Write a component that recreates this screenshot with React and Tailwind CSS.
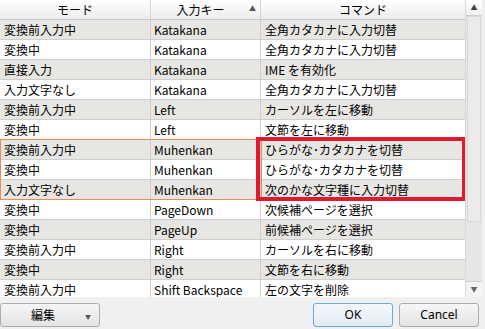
import React from "react";

const rows = [
  ["変換前入力中", "Katakana", "全角カタカナに入力切替"],
  ["変換中", "Katakana", "全角カタカナに入力切替"],
  ["直接入力", "Katakana", "IME を有効化"],
  ["入力文字なし", "Katakana", "全角カタカナに入力切替"],
  ["変換前入力中", "Left", "カーソルを左に移動"],
  ["変換中", "Left", "文節を左に移動"],
  ["変換前入力中", "Muhenkan", "ひらがな･カタカナを切替"],
  ["変換中", "Muhenkan", "ひらがな･カタカナを切替"],
  ["入力文字なし", "Muhenkan", "次のかな文字種に入力切替"],
  ["変換中", "PageDown", "次候補ページを選択"],
  ["変換中", "PageUp", "前候補ページを選択"],
  ["変換前入力中", "Right", "カーソルを右に移動"],
  ["変換中", "Right", "文節を右に移動"],
  ["変換前入力中", "Shift Backspace", "左の文字を削除"],
];

export default function App() {
  return (
    <div
      className="w-[485px] h-[329px] bg-[#f0f0f0] flex flex-col overflow-hidden text-[12px] text-black"
      style={{ fontFamily: '"Noto Sans CJK JP", "Noto Sans", sans-serif' }}
    >
      <div className="flex h-[297px] shrink-0">
        <div className="relative w-[465px] h-[297px] overflow-hidden bg-white">
          {/* header */}
          <div className="flex h-[20px] border-b border-[#c9c9c9] bg-gradient-to-b from-[#ffffff] to-[#ececec]">
            <div className="w-[151px] border-r border-[#d4d4d4] flex items-center justify-center leading-none">モード</div>
            <div className="w-[110px] border-r border-[#d4d4d4] flex items-center justify-center relative leading-none">
              <span className="ml-[-10px]">入力キー</span>
              <span className="absolute right-[4px] top-[5px] text-[7px] text-[#555]">▲</span>
            </div>
            <div className="flex-1 flex items-center justify-center leading-none">コマンド</div>
          </div>
          {rows.map((r, i) => (
            <div
              key={i}
              className={`flex h-[20px] border-b border-[#cfcfcf] ${i % 2 === 0 ? "bg-[#e8e6e3]" : "bg-white"}`}
            >
              <div className="w-[151px] border-r border-[#cfcfcf] flex items-center pl-[4px] leading-none">{r[0]}</div>
              <div className="w-[110px] border-r border-[#cfcfcf] flex items-center pl-[3px] leading-none">{r[1]}</div>
              <div className="flex-1 flex items-center pl-[4px] leading-none">{r[2]}</div>
            </div>
          ))}
          <div className="absolute left-0 top-[139px] w-[262px] h-[61px] border border-[#ee8a55] pointer-events-none" />
          <div className="absolute left-[256px] top-[137px] w-[210px] h-[64px] border-[4px] border-[#e0192f] pointer-events-none" />
        </div>
        <div className="w-[17px] h-[297px] bg-[#e6e6e6] flex flex-col border-l border-[#d8d8d8]">
          <div className="h-[16px] bg-gradient-to-b from-white to-[#f0f0f0] border-b border-[#cfcfcf] flex items-center justify-center text-[7px] text-[#444]">▲</div>
          <div className="h-[206px] mx-[1px] bg-[#ebebeb] border border-[#dadada]" />
          <div className="flex-1" />
          <div className="h-[16px] bg-[#f4f4f4] border-t border-[#cfcfcf] flex items-center justify-center text-[7px] text-[#666]">▼</div>
        </div>
      </div>
      <div className="flex items-start pt-[6px] h-[32px]">
        <button className="w-[100px] h-[24px] rounded-[3px] border border-[#adadad] bg-gradient-to-b from-[#f6f6f6] to-[#e4e4e4] flex items-center relative">
          <span className="ml-[30px]">編集</span>
          <span className="absolute right-[8px] top-[8px] text-[6px] text-[#555]">▼</span>
        </button>
        <div className="flex-1" />
        <button
          className="w-[80px] h-[24px] rounded-[3px] border border-[#6aa9e8] bg-gradient-to-b from-[#f4f8fc] to-[#e2ecf6] flex items-center justify-center"
          style={{ fontFamily: '"Noto Sans", sans-serif' }}
        >
          OK
        </button>
        <button
          className="ml-[6px] mr-[6px] w-[80px] h-[24px] rounded-[3px] border border-[#adadad] bg-gradient-to-b from-[#f6f6f6] to-[#e4e4e4] flex items-center justify-center"
          style={{ fontFamily: '"Noto Sans", sans-serif' }}
        >
          Cancel
        </button>
      </div>
    </div>
  );
}
